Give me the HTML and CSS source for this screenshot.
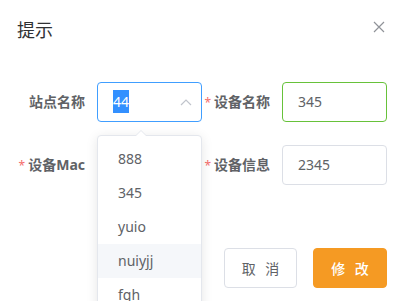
FILE: index.html
```html
<!DOCTYPE html>
<html lang="zh-CN">
<head>
  <meta charset="UTF-8" />
  <title>提示</title>
  <link rel="stylesheet" href="styles.css">
</head>
<body>
  <div class="dialog">
    <!-- Header -->
    <div class="dialog-header">
      <span class="dialog-title">提示</span>
      <button class="dialog-close" aria-label="Close">
        <svg width="12" height="12" viewBox="0 0 12 12"><path d="M1 1L11 11M11 1L1 11" stroke="#909399" stroke-width="1.2" fill="none"/></svg>
      </button>
    </div>

    <!-- Form -->
    <div class="form">
      <label class="form-label">站点名称</label>
      <div class="select">
        <div class="input is-focus"><span class="selected-text">44</span></div>
        <svg class="select-arrow" width="12" height="7" viewBox="0 0 12 7"><path d="M1 6L6 1L11 6" stroke="#c0c4cc" stroke-width="1.2" fill="none"/></svg>
        <div class="dropdown">
          <span class="dropdown-arrow"></span>
          <ul class="dropdown-list">
            <li>888</li>
            <li>345</li>
            <li>yuio</li>
            <li class="hover">nuiyjj</li>
            <li>fgh</li>
          </ul>
        </div>
      </div>
      <label class="form-label required">设备名称</label>
      <div class="input is-valid">345</div>

      <label class="form-label required">设备Mac</label>
      <div></div>
      <label class="form-label required">设备信息</label>
      <div class="input">2345</div>
    </div>

    <!-- Footer -->
    <div class="dialog-footer">
      <button class="btn">取 消</button>
      <button class="btn btn-warning">修 改</button>
    </div>
  </div>
</body>
</html>
```

FILE: styles.css
```css
* { margin:0; padding:0; box-sizing:border-box; }
body {
  font-family: "Noto Sans", "Noto Sans CJK SC", sans-serif;
  background:#fff; color:#606266;
}

/* Dialog */
.dialog { height:301px; overflow:hidden; padding:18px 19px 0 17px; }
.dialog-header {
  display:flex; justify-content:space-between; align-items:center;
  height:24px; padding-right:2px;
}
.dialog-title { font-size:18px; line-height:24px; color:#303133; }
.dialog-close { background:none; border:none; display:flex; cursor:pointer; margin-top:-6px; }

/* Form */
.form {
  display:grid; grid-template-columns:80px 105px 80px 105px;
  row-gap:22px; margin-top:40px;
}
.form-label {
  font-size:14px; font-weight:700; line-height:40px; white-space:nowrap;
  text-align:right; padding-right:12px; color:#606266;
}
.form-label.required::before {
  content:"*"; color:#f56c6c; margin-right:3px; font-weight:400; font-size:12px;
}

.input {
  height:40px; border:1px solid #dcdfe6; border-radius:4px;
  padding:0 15px; font-size:14px; line-height:38px; color:#606266;
}
.input.is-focus { border-color:#409eff; }
.input.is-valid { border-color:#67c23a; }

/* Select */
.select { position:relative; }
.selected-text { background:#3390ff; color:#fff; padding:2px 0; }
.select-arrow { position:absolute; right:10px; top:17px; }

.dropdown {
  position:absolute; top:53px; left:0; width:105px; z-index:2;
  background:#fff; border:1px solid #e4e7ed; border-radius:4px;
  box-shadow:0 2px 12px rgba(0,0,0,0.1);
}
.dropdown-arrow {
  position:absolute; top:-6px; left:37px; width:0; height:0;
  border:6px solid transparent; border-top-width:0; border-bottom-color:#e4e7ed;
}
.dropdown-arrow::after {
  content:""; position:absolute; top:1px; left:-6px;
  border:6px solid transparent; border-top-width:0; border-bottom-color:#fff;
}
.dropdown-list { list-style:none; padding:6px 0; }
.dropdown-list li { height:34px; line-height:34px; padding:0 20px; font-size:14px; color:#606266; }
.dropdown-list li.hover { background:#f5f7fa; }

/* Footer */
.dialog-footer { display:flex; justify-content:flex-end; gap:16px; margin-top:62px; }
.btn {
  width:73px; height:40px; border:1px solid #dcdfe6; border-radius:4px;
  background:#fff; color:#606266; font-size:14px; font-family:inherit;
  letter-spacing:3px; text-indent:3px; cursor:pointer;
}
.btn-warning { width:74px; background:#f59a23; border-color:#f59a23; color:#fff; font-weight:500; }
```
